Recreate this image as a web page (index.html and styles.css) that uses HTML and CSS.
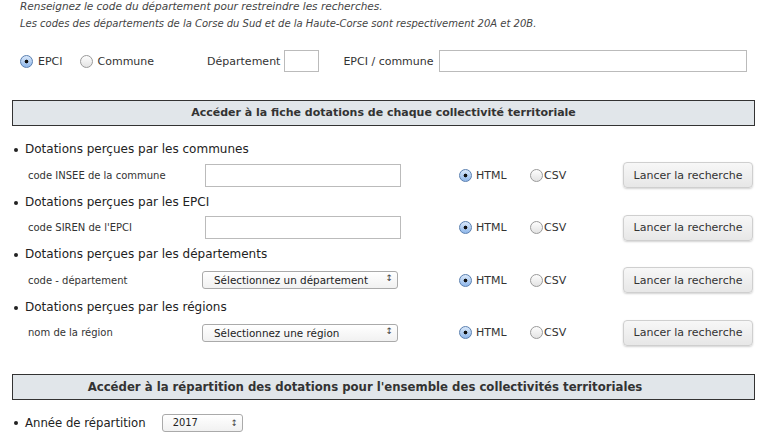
FILE: index.html
```html
<!DOCTYPE html>
<html lang="fr">

<head>
  <title>Dotations des collectivités territoriales</title>
  <meta charset="utf-8">
  <link rel="stylesheet" href="styles.css">
</head>

<body>
  <div id="container">
    <div class="intro">
      <p class="first">Renseignez le code du département pour restreindre les recherches.</p>
      <p>Les codes des départements de la Corse du Sud et de la Haute-Corse sont respectivement 20A et 20B.</p>
    </div>

    <div class="search">
      <label class="opt"><input type="radio" name="type" checked>EPCI</label>
      <label class="opt commune"><input type="radio" name="type">Commune</label>
      <label class="dep">Département <input type="text" class="txt small"></label>
      <label class="epci">EPCI / commune <input type="text" class="txt wide"></label>
    </div>

    <div class="section">Accéder à la fiche dotations de chaque collectivité territoriale</div>

    <ul class="items">
      <li>
        <div class="title">Dotations perçues par les communes</div>
        <div class="row">
          <span class="lbl">code INSEE de la commune</span>
          <input type="text" class="txt field">
          <label class="fmt"><input type="radio" name="f1" checked>HTML</label>
          <label class="fmt csv"><input type="radio" name="f1">CSV</label>
          <button>Lancer la recherche</button>
        </div>
      </li>
      <li>
        <div class="title">Dotations perçues par les EPCI</div>
        <div class="row">
          <span class="lbl">code SIREN de l'EPCI</span>
          <input type="text" class="txt field">
          <label class="fmt"><input type="radio" name="f2" checked>HTML</label>
          <label class="fmt csv"><input type="radio" name="f2">CSV</label>
          <button>Lancer la recherche</button>
        </div>
      </li>
      <li>
        <div class="title">Dotations perçues par les départements</div>
        <div class="row">
          <span class="lbl">code - département</span>
          <span class="sel field"><select>
              <option>Sélectionnez un département</option>
            </select></span>
          <label class="fmt"><input type="radio" name="f3" checked>HTML</label>
          <label class="fmt csv"><input type="radio" name="f3">CSV</label>
          <button>Lancer la recherche</button>
        </div>
      </li>
      <li>
        <div class="title">Dotations perçues par les régions</div>
        <div class="row">
          <span class="lbl">nom de la région</span>
          <span class="sel field"><select>
              <option>Sélectionnez une région</option>
            </select></span>
          <label class="fmt"><input type="radio" name="f4" checked>HTML</label>
          <label class="fmt csv"><input type="radio" name="f4">CSV</label>
          <button>Lancer la recherche</button>
        </div>
      </li>
    </ul>

    <div class="section condensed">Accéder à la répartition des dotations pour l'ensemble des collectivités territoriales</div>

    <ul class="items condensed">
      <li class="year">
        Année de répartition
        <span class="sel year-sel"><select>
            <option>2017</option>
          </select></span>
      </li>
    </ul>
  </div>
</body>

</html>
```

FILE: styles.css
```css
* {
  box-sizing: border-box;
}

body {
  margin: 0;
  background-color: white;
}

#container {
  font-family: "DejaVu Sans", Verdana, sans-serif;
  font-size: 12px;
  color: #222;
}

.intro {
  padding: 0 0 0 20px;
  margin-top: -2px;
}

.intro p {
  margin: 0;
  font-size: 10px;
  font-style: italic;
  line-height: 17px;
  color: #444;
}

.intro p.first {
  font-size: 10.5px;
}

/* EPCI / commune search line */
.search {
  display: flex;
  align-items: center;
  height: 24px;
  margin-top: 17px;
  padding-left: 20px;
  font-size: 11px;
  color: #333;
}

.opt {
  display: flex;
  align-items: center;
}

.opt input {
  margin: 0 5px 0 0;
}

.commune {
  margin-left: 17px;
}

.dep {
  display: flex;
  align-items: center;
  margin-left: 53px;
}

.epci {
  display: flex;
  align-items: center;
  margin-left: 24px;
}

.txt {
  height: 22px;
  border: 1px solid #bbb;
  background-color: white;
  font: inherit;
  padding: 2px 4px;
}

.small {
  width: 35px;
  margin-left: 4px;
}

.wide {
  width: 308px;
  margin-left: 5px;
}

/* grey title bars */
.section {
  margin: 27px 12px 0 12px;
  height: 26px;
  line-height: 24px;
  border: 1px solid #333;
  background-color: #e1e6ea;
  text-align: center;
  font-size: 11px;
  font-weight: bold;
  color: #333;
}

.items {
  list-style: none;
  margin: 15px 0 0 0;
  padding: 0;
}

.items li {
  margin-bottom: 5.5px;
}

.title,
.year {
  position: relative;
  padding-left: 25px;
  height: 17px;
  line-height: 17px;
}

.title::before,
.year::before {
  content: "";
  position: absolute;
  left: 14px;
  top: 7px;
  width: 4px;
  height: 4px;
  border-radius: 50%;
  background-color: #222;
}

.row {
  display: flex;
  align-items: center;
  height: 26px;
  margin-top: 4px;
  padding-left: 28px;
  font-size: 10px;
  color: #333;
}

.lbl {
  width: 177px;
}

.field {
  width: 196px;
}

input.field {
  height: 23px;
}

.fmt {
  display: flex;
  align-items: center;
  margin-left: 58px;
  width: 71px;
  font-size: 11px;
}

.fmt input {
  margin: 0 4px 0 0;
}

.fmt.csv {
  margin-left: 0;
  width: 93px;
}

.fmt.csv input {
  margin-right: 1px;
}

/* mac like radio buttons */
input[type="radio"] {
  appearance: none;
  -webkit-appearance: none;
  width: 13px;
  height: 13px;
  border-radius: 50%;
  border: 1px solid #9a9a9a;
  background: linear-gradient(#fdfdfd, #e3e3e3);
}

input[type="radio"]:checked {
  border-color: #5a7fb0;
  background: radial-gradient(circle, #111 0, #111 1.6px, transparent 2.2px),
    linear-gradient(#d9e8fa, #8fb7ea);
}

button {
  height: 26px;
  width: 130px;
  margin-left: 0;
  font-family: inherit;
  font-size: 11px;
  color: #333;
  background: linear-gradient(#f7f7f7, #e7e7e7);
  border: 1px solid #cfcfcf;
  border-radius: 4px;
  box-shadow: 0 1px 2px rgba(0, 0, 0, .18);
}

/* select with the double arrow */
.sel {
  position: relative;
  display: inline-block;
  height: 18px;
}

.sel select {
  appearance: none;
  -webkit-appearance: none;
  width: 100%;
  height: 18px;
  font-family: inherit;
  font-size: 10.4px;
  color: #222;
  padding: 0 0 0 11px;
  border: 1px solid #aaa;
  border-radius: 3px;
  background: linear-gradient(#ffffff, #f1f1f1);
}

.sel::after {
  content: "\2195";
  position: absolute;
  right: 5px;
  top: 2px;
  font-size: 9px;
  color: #444;
  pointer-events: none;
}

span.field {
  margin-left: -3px;
  margin-right: 3px;
}

.condensed {
  font-family: "DejaVu Sans Condensed", "DejaVu Sans", sans-serif;
}

.section.condensed {
  margin-top: 28px;
  padding-right: 37px;
  font-size: 13px;
}

.items.condensed {
  margin-top: 14px;
}

.year {
  display: flex;
  align-items: center;
  font-size: 13px;
}

.year-sel {
  width: 81px;
  margin-left: 16px;
}

.year-sel select {
  font-size: 11px;
  padding-left: 10px;
}
```
